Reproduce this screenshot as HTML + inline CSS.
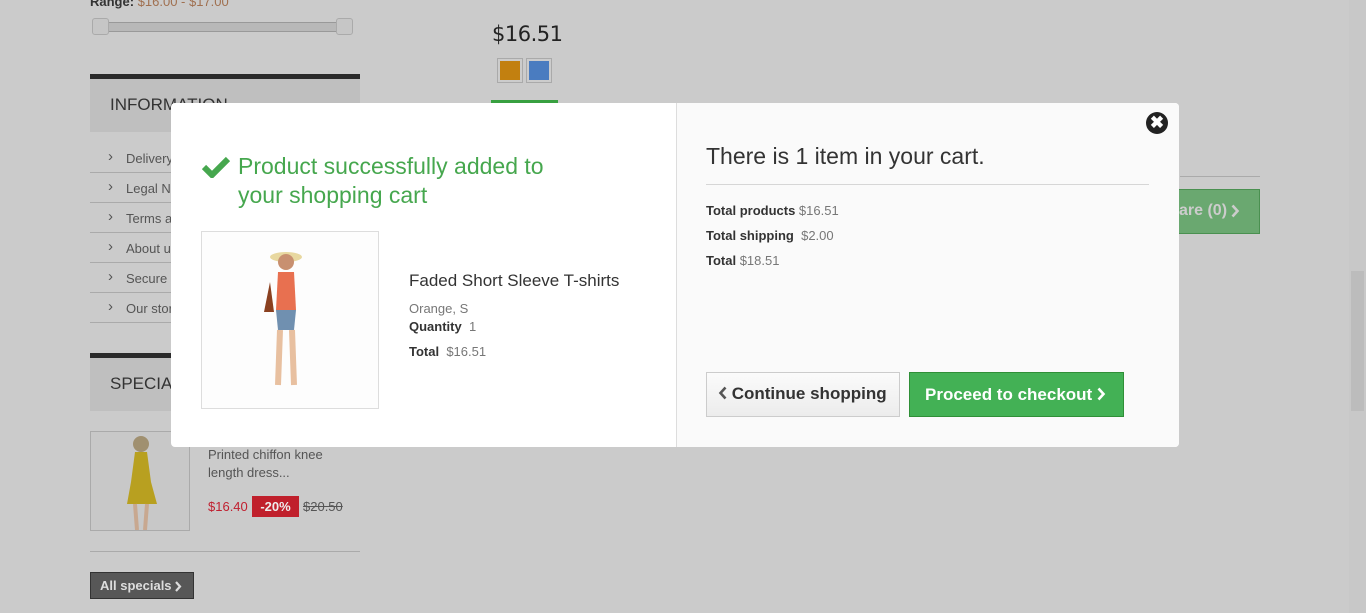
<!DOCTYPE html>
<html><head><style>
*{margin:0;padding:0;box-sizing:border-box}
body{width:1366px;height:613px;overflow:hidden;background:#cbcbcb;font-family:"Liberation Sans",sans-serif;position:relative}
.a{position:absolute}
.li{position:absolute;left:90px;width:270px;height:30px;border-bottom:1px solid #aaa;font-size:13px;color:#555;padding:8px 0 0 36px}
.li:before{content:"›";position:absolute;left:18px;top:5px;font-size:15px}
.ch{display:inline-block;vertical-align:middle}
</style></head><body>
<div class="a" style="left:90px;top:-6px;font-size:13px;color:#333;font-weight:bold">Range: <span style="color:#a07050;font-weight:normal">$16.00 - $17.00</span></div>
<div class="a" style="left:96px;top:22px;width:250px;height:10px;background:#b8b8b8;border:1px solid #999;border-radius:3px"></div>
<div class="a" style="left:92px;top:18px;width:17px;height:17px;background:#c6c6c6;border:1px solid #aaa;border-radius:3px"></div>
<div class="a" style="left:336px;top:18px;width:17px;height:17px;background:#c6c6c6;border:1px solid #aaa;border-radius:3px"></div>
<div class="a" style="left:90px;top:74px;width:270px;height:5px;background:#2a2a2a"></div>
<div class="a" style="left:90px;top:79px;width:270px;height:53px;background:#bfbfbf;font-size:17px;color:#333;padding:16px 20px">INFORMATION</div>
<div class="li" style="top:143px">Delivery</div>
<div class="li" style="top:173px">Legal N</div>
<div class="li" style="top:203px">Terms a</div>
<div class="li" style="top:233px">About u</div>
<div class="li" style="top:263px">Secure</div>
<div class="li" style="top:293px">Our stor</div>
<div class="a" style="left:90px;top:353px;width:270px;height:5px;background:#2a2a2a"></div>
<div class="a" style="left:90px;top:358px;width:270px;height:53px;background:#bfbfbf;font-size:17px;color:#333;padding:16px 20px">SPECIALS</div>
<div class="a" style="left:90px;top:431px;width:100px;height:100px;border:1px solid #aaa;background:#c8c8c8">
<svg width="98" height="98"><circle cx="50" cy="12" r="8" fill="#a09070"/><path d="M44 20 h12 l4 30 l6 22 h-30 l4-22z" fill="#b8a020"/><path d="M44 72 l2 26 M56 72 l-2 26" stroke="#c8a890" stroke-width="4"/></svg></div>
<div class="a" style="left:208px;top:446px;font-size:13px;line-height:18px;color:#555">Printed chiffon knee<br>length dress...</div>
<div class="a" style="left:208px;top:499px;font-size:13px;color:#c02030">$16.40</div>
<div class="a" style="left:252px;top:496px;width:47px;height:21px;background:#c0202c;color:#eee;font-weight:bold;font-size:13px;text-align:center;line-height:21px">-20%</div>
<div class="a" style="left:303px;top:499px;font-size:13px;color:#555;text-decoration:line-through">$20.50</div>
<div class="a" style="left:90px;top:551px;width:270px;height:1px;background:#aaa"></div>
<div class="a" style="left:90px;top:572px;width:104px;height:27px;background:#575757;border:1px solid #333;color:#ddd;font-weight:bold;font-size:13px;padding:5px 9px">All specials <svg class="ch" width="7" height="11"><path d="M1 1 l4 4.5 l-4 4.5" stroke="#ddd" stroke-width="2.2" fill="none"/></svg></div>
<div class="a" style="left:492px;top:22px;font-size:21px;color:#222;font-family:'DejaVu Sans',sans-serif;letter-spacing:-0.5px">$16.51</div>
<div class="a" style="left:497px;top:58px;width:26px;height:25px;border:1px solid #aaa;background:#c28010;outline:2px solid #ccc;outline-offset:-3px"></div>
<div class="a" style="left:526px;top:58px;width:26px;height:25px;border:1px solid #aaa;background:#4a7cc0;outline:2px solid #ccc;outline-offset:-3px"></div>
<div class="a" style="left:491px;top:100px;width:67px;height:4px;background:#38a040"></div>
<div class="a" style="left:1180px;top:176px;width:80px;height:1px;background:#aaa"></div>
<div class="a" style="left:1160px;top:189px;width:100px;height:45px;background:#6aa870;border:1px solid #4a9050;color:#ccc;font-weight:bold;font-size:16px;padding:12px 0 0 18px">are (0) <svg class="ch" width="9" height="14"><path d="M1.5 1.5 l5 5.5 l-5 5.5" stroke="#ccc" stroke-width="2.6" fill="none"/></svg></div>
<div class="a" style="left:1349px;top:0;width:17px;height:613px;background:#c8c8c8"></div>
<div class="a" style="left:1351px;top:271px;width:13px;height:140px;background:#bcbcbc"></div>
<!-- modal -->
<div class="a" style="left:171px;top:103px;width:1008px;height:344px;background:#fff;border-radius:4px;overflow:hidden">
<div class="a" style="left:505px;top:0;width:503px;height:344px;background:#fafafa;border-left:1px solid #ddd"></div>
<svg class="a" style="left:31px;top:53px" width="28" height="22"><path d="M2 11 l8 8 l16-16" stroke="#46a74e" stroke-width="6" fill="none"/></svg>
<div class="a" style="left:67px;top:49px;font-size:23px;line-height:29px;color:#46a74e">Product successfully added to<br>your shopping cart</div>
<div class="a" style="left:30px;top:128px;width:178px;height:178px;border:1px solid #ddd;background:#fdfdfd">
<svg width="176" height="176"><ellipse cx="84" cy="25" rx="16" ry="5" fill="#e8d8a0"/><circle cx="84" cy="30" r="8" fill="#c89070"/><path d="M76 40 h16 l2 38 h-20z" fill="#e87050"/><path d="M68 50 l-6 30 h10z" fill="#8a4020"/><path d="M74 78 h20 l-2 20 h-16z" fill="#7090b0"/><path d="M78 98 l-2 55 M90 98 l2 55" stroke="#e8c0a0" stroke-width="6"/></svg></div>
<div class="a" style="left:238px;top:168px;font-size:17px;color:#333">Faded Short Sleeve T-shirts</div>
<div class="a" style="left:238px;top:198px;font-size:13px;color:#777">Orange, S</div>
<div class="a" style="left:238px;top:216px;font-size:13px;color:#777"><b style="color:#333">Quantity</b>&nbsp; 1</div>
<div class="a" style="left:238px;top:241px;font-size:13px;color:#777"><b style="color:#333">Total</b>&nbsp; $16.51</div>
<div class="a" style="left:975px;top:9px;width:22px;height:22px;border-radius:50%;background:#222;color:#fff;font-size:17px;font-weight:bold;text-align:center;line-height:22px">✖</div>
<div class="a" style="left:535px;top:40px;font-size:23px;color:#333">There is 1 item in your cart.</div>
<div class="a" style="left:535px;top:81px;width:443px;height:1px;background:#d6d6d6"></div>
<div class="a" style="left:535px;top:100px;font-size:13px;color:#777"><b style="color:#333">Total products</b> $16.51</div>
<div class="a" style="left:535px;top:125px;font-size:13px;color:#777"><b style="color:#333">Total shipping</b>&nbsp; $2.00</div>
<div class="a" style="left:535px;top:150px;font-size:13px;color:#777"><b style="color:#333">Total</b> $18.51</div>
<div class="a" style="left:535px;top:269px;width:194px;height:45px;border:1px solid #ccc;background:linear-gradient(#fbfbfb,#ececec);font-size:17px;font-weight:bold;color:#333;padding:11px 0 0 11px"><svg class="ch" width="9" height="14" style="margin-top:-3px"><path d="M7.5 1.5 l-5 5.5 l5 5.5" stroke="#555" stroke-width="2.6" fill="none"/></svg> Continue shopping</div>
<div class="a" style="left:738px;top:269px;width:215px;height:45px;border:1px solid #2f8f37;background:#43b155;font-size:17px;font-weight:bold;color:#fff;padding:12px 0 0 15px">Proceed to checkout <svg class="ch" width="9" height="14" style="margin-top:-3px"><path d="M1.5 1.5 l5 5.5 l-5 5.5" stroke="#fff" stroke-width="2.6" fill="none"/></svg></div>
</div>
</body></html>
